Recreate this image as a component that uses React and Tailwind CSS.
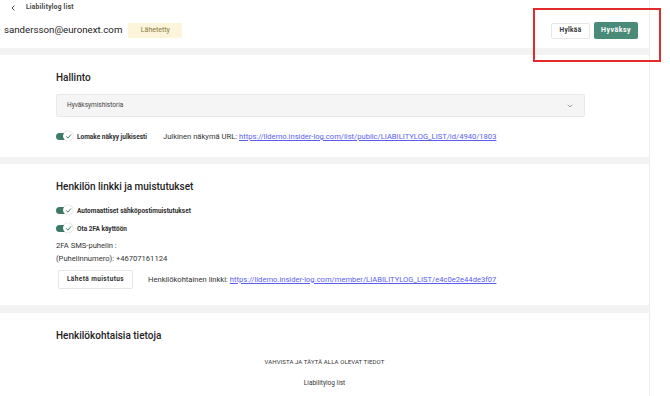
import { ChevronLeft, ChevronDown } from "lucide-react"

function Toggle({ label }) {
    return (
        <div className="flex items-center h-[12px]">
            <div className="relative w-[18px] h-[10px] flex items-center">
                <div className="w-[15px] h-[7px] rounded-full bg-[#3e7b67]" />
                <div className="absolute left-[7px] top-0 w-[10px] h-[10px] rounded-full bg-white shadow-[0_0_1px_rgba(0,0,0,0.35)] flex items-center justify-center">
                    <svg width="7" height="7" viewBox="0 0 10 10" fill="none">
                        <path d="M2 5.2 L4.2 7.3 L8.2 2.6" stroke="#3e7b67" strokeWidth="1.4" strokeLinecap="round" strokeLinejoin="round" />
                    </svg>
                </div>
            </div>
            <span className="ml-[3px] pt-[2px] text-[6.5px] leading-[10px] font-bold text-[#2f2f2f]">{label}</span>
        </div>
    )
}

function Band() {
    return <div className="h-[7px] bg-[#f3f3f3]" />
}

export default function App() {
    return (
        <div className="w-[670px] h-[396px] overflow-hidden bg-white flex font-['Roboto',_'Liberation_Sans',_sans-serif] text-[#2f2f2f]">
            <div className="w-[650px] shrink-0 border-r border-[#ededed] flex flex-col">
                {/* header */}
                <div className="relative h-[48px] px-[4px]">
                    <div className="flex items-center h-[16px] pl-[5px] gap-[9px]">
                        <ChevronLeft size={8} strokeWidth={3} className="text-[#444]" />
                        <span className="text-[6.5px] font-bold text-[#444] tracking-[0.3px]">Liabilitylog list</span>
                    </div>
                    <div className="flex items-center h-[29px]">
                        <span className="text-[9.7px] text-[#222]">sandersson@euronext.com</span>
                        <span className="ml-[6px] w-[54px] h-[15px] bg-[#fcf5dc] text-[#8a7838] text-[7px] flex items-center justify-center">
                            Lähetetty
                        </span>
                        <div className="ml-auto mr-[7px] flex items-center gap-[4px]">
                            <button className="w-[39px] h-[16px] bg-white border border-[#e6e6e6] rounded-[2px] text-[6.5px] font-bold text-[#333] tracking-[0.3px]">
                                Hylkää
                            </button>
                            <button className="w-[44px] h-[17px] bg-[#4a8a78] rounded-[2px] text-[7px] font-bold text-white tracking-[0.5px]">
                                Hyväksy
                            </button>
                        </div>
                    </div>
                    <div className="absolute left-[533px] top-[8px] w-[128px] h-[54px] border-2 border-[#e32b2b] z-10" />
                </div>
                <Band />

                {/* Hallinto */}
                <div className="pl-[56px] pt-[16px] h-[102px]">
                    <h2 className="text-[10px] font-medium text-[#222] leading-[14px]">Hallinto</h2>
                    <div className="mt-[9px] w-[529px] h-[23px] bg-[#f5f5f5] border border-[#e9e9e9] rounded-[2px] flex items-center px-[10px]">
                        <span className="text-[6.5px] text-[#444]">Hyväksymishistoria</span>
                        <ChevronDown size={8} strokeWidth={2} className="ml-auto text-[#777]" />
                    </div>
                    <div className="mt-[13px] flex items-center">
                        <Toggle label="Lomake näkyy julkisesti" />
                        <span className="ml-[16px] pt-[1px] text-[7.6px] text-[#333]">
                            Julkinen näkymä URL:{" "}
                            <a className="text-[#5b5ef0] underline">https://lldemo.insider-log.com/list/public/LIABILITYLOG_LIST/id/4940/1803</a>
                        </span>
                    </div>
                </div>
                <Band />

                {/* Henkilön linkki */}
                <div className="pl-[56px] pt-[16px] h-[141px]">
                    <h2 className="text-[10px] font-medium text-[#222] leading-[14px]">Henkilön linkki ja muistutukset</h2>
                    <div className="mt-[10px] flex flex-col gap-[6px]">
                        <Toggle label="Automaattiset sähköpostimuistutukset" />
                        <Toggle label="Ota 2FA käyttöön" />
                    </div>
                    <div className="mt-[5px] text-[7.6px] text-[#333] leading-[13px]">
                        <div>2FA SMS-puhelin :</div>
                        <div>(Puhelinnumero): +46707161124</div>
                    </div>
                    <div className="mt-[5px] flex items-center">
                        <button className="ml-[2px] w-[75px] h-[19px] bg-white border border-[#e6e6e6] rounded-[2px] text-[6.5px] font-bold text-[#333] tracking-[0.4px]">
                            Lähetä muistutus
                        </button>
                        <span className="ml-[15px] text-[7.6px] text-[#333]">
                            Henkilökohtainen linkki:{" "}
                            <a className="text-[#5b5ef0] underline">https://lldemo.insider-log.com/member/LIABILITYLOG_LIST/e4c0e2e44de3f07</a>
                        </span>
                    </div>
                </div>
                <div className="h-[8px] bg-[#f3f3f3]" />

                {/* Henkilökohtaisia tietoja */}
                <div className="pt-[16px] flex-1">
                    <h2 className="pl-[56px] text-[10px] font-medium text-[#222] leading-[14px]">Henkilökohtaisia tietoja</h2>
                    <div className="mt-[14px] text-center text-[6px] text-[#333] tracking-[0.1px]">VAHVISTA JA TÄYTÄ ALLA OLEVAT TIEDOT</div>
                    <div className="mt-[13px] text-center text-[6.5px] text-[#333]">Liabilitylog list</div>
                </div>
            </div>
            <div className="flex-1 bg-white" />
        </div>
    )
}
